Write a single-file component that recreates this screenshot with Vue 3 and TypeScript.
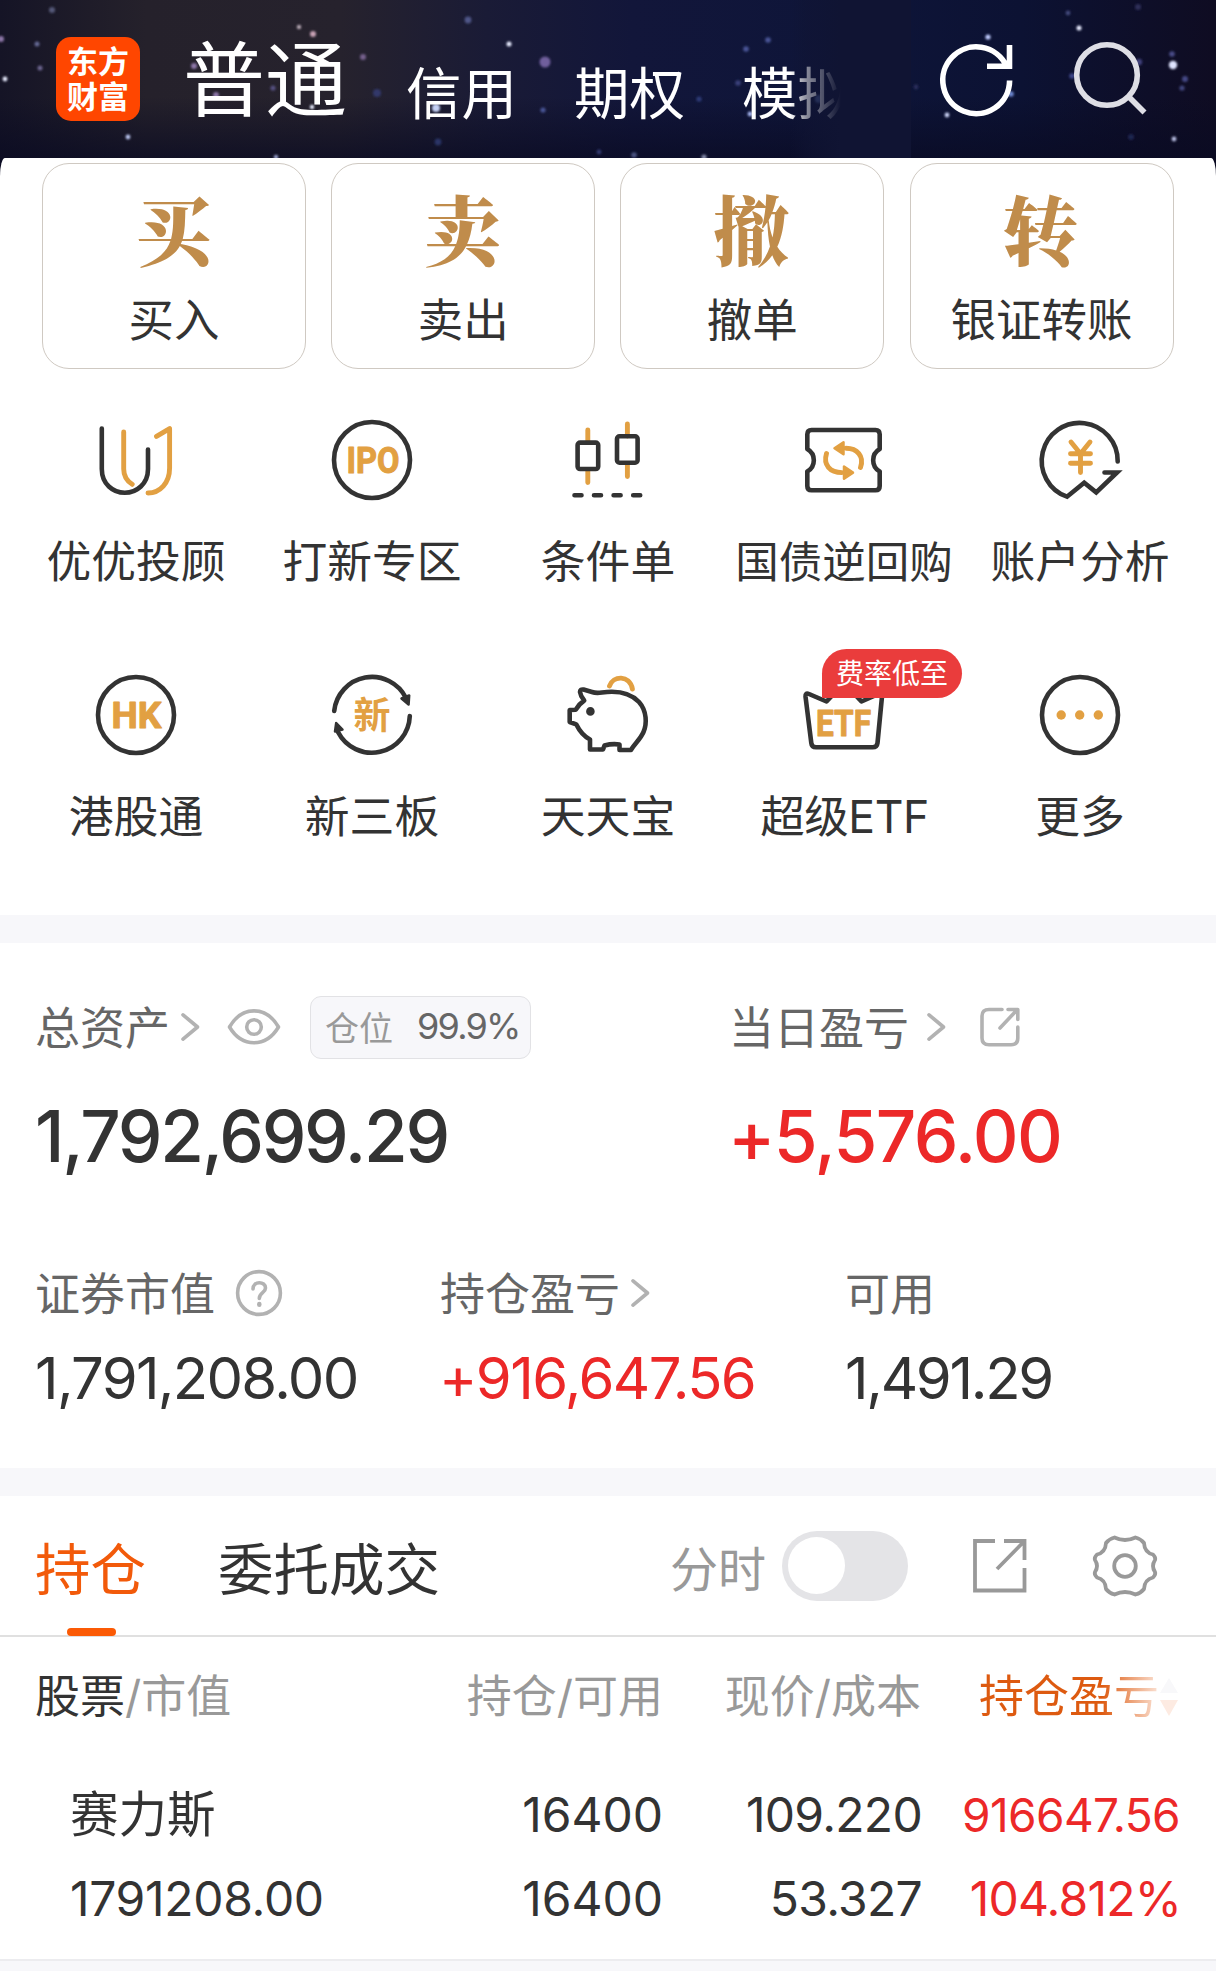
<script setup lang="ts">
interface Star { x: number; y: number; r: number; c: string }

const W = '#e8ecff'
const B = '#4a5596'
const P = '#8d76a8'
const stars: Star[] = [
  [52, 10, 3, '#555878'], [1, 39, 3, P], [37, 44, 2.5, '#666a96'], [40, 68, 2.5, '#6d6690'], [5, 79, 2.4, W],
  [128, 137, 2.4, '#b9c4ee'], [299, 27, 2.2, '#b7a9b4'], [313, 34, 3, '#c9a3b6'], [194, 66, 3, P], [216, 95, 3, P],
  [273, 88, 2.6, '#574f80'], [312, 107, 2.2, W], [363, 57, 3, '#75618c'], [377, 93, 4, '#33386a'], [276, 157, 2.2, '#9aa3cf'],
  [436, 108, 4, '#c4d0f5'], [468, 20, 3.4, '#4f5688'], [509, 44, 2.5, W], [545, 62, 5.5, '#6f5f9c'], [543, 110, 2.6, B],
  [438, 142, 3.4, '#2b3566'], [599, 152, 2.4, '#343a70'], [746, 49, 2.8, B], [768, 40, 2.8, B], [738, 83, 2.8, '#3b417a'],
  [750, 114, 2.4, '#a5b4ef'], [699, 99, 2.6, '#2d3a78'], [819, 99, 4, '#4b629c'], [634, 155, 2.8, '#4a5280'], [704, 157, 2.6, '#8187a6'],
  [988, 37, 2.6, '#c0cbff'], [1068, 13, 2.4, '#43487c'], [1079, 28, 2.5, W], [1138, 7, 3, '#2d2d58'], [1173, 65, 4.2, '#dfe4ff'],
  [1172, 54, 2.8, '#4a4c88'], [1185, 79, 3, '#454986'], [1182, 88, 2.6, '#43467e'], [1174, 139, 2.4, '#b9bfe4'], [947, 115, 2.4, '#c9d2f4'],
  [1011, 94, 2.8, '#6c86cf'], [1072, 76, 2.8, '#3c4488'], [1139, 62, 3.2, '#3f3f7a'], [916, 87, 2.4, '#292e5c'], [1131, 137, 3, '#1e2650'],
].map(([x, y, r, c]) => ({ x, y, r, c }) as Star)

const trades = [
  { mark: '买', label: '买入' },
  { mark: '卖', label: '卖出' },
  { mark: '撤', label: '撤单' },
  { mark: '转', label: '银证转账' },
]

const tools = [
  { icon: 'uu', label: '优优投顾' },
  { icon: 'ipo', label: '打新专区' },
  { icon: 'candles', label: '条件单' },
  { icon: 'ticket', label: '国债逆回购', tight: true },
  { icon: 'analysis', label: '账户分析' },
  { icon: 'hk', label: '港股通' },
  { icon: 'board', label: '新三板' },
  { icon: 'pig', label: '天天宝' },
  { icon: 'etf', label: '超级ETF', badge: '费率低至', latin: true },
  { icon: 'more', label: '更多' },
]
</script>

<template>
  <div class="page">
    <header class="top">
      <svg class="sky" width="1216" height="176" viewBox="0 0 1216 176">
        <defs>
          <filter id="soft" x="-50%" y="-50%" width="200%" height="200%"><feGaussianBlur stdDeviation="0.9" /></filter>
        </defs>
        <circle v-for="(s, i) in stars" :key="i" :cx="s.x" :cy="s.y" :r="s.r" :fill="s.c" filter="url(#soft)" />
      </svg>
      <div class="logo"><span>东方</span><span>财富</span></div>
      <nav class="modes">
        <span class="mode active">普通</span>
        <span class="mode">信用</span>
        <span class="mode">期权</span>
        <span class="mode">模拟</span>
      </nav>
      <div class="fade"></div>
      <svg class="refresh" width="80" height="80" viewBox="0 0 80 80" fill="none" stroke="#fff" stroke-width="5.6">
        <path d="M73.6 40.5A33.4 33.4 0 1 1 70.4 26M73.5 5V28.5M51 26.2H76.2" />
      </svg>
      <svg class="search" width="80" height="80" viewBox="0 0 80 80" fill="none" stroke="#dedee5" stroke-width="5.6">
        <circle cx="34" cy="35" r="30.3" /><path d="M55.5 56.5L71.5 72.5" />
      </svg>
    </header>

    <main class="sheet">
      <section class="trades">
        <button v-for="t in trades" :key="t.label" class="trade">
          <span class="mark">{{ t.mark }}</span>
          <span class="trade-label">{{ t.label }}</span>
        </button>
      </section>

      <section class="tools">
        <div v-for="t in tools" :key="t.label" class="tool">
          <svg class="icon" width="88" height="88" viewBox="-44 -44 88 88" fill="none" stroke="#333" stroke-width="4.6" stroke-linecap="round" stroke-linejoin="round">
            <template v-if="t.icon === 'uu'">
              <path d="M-34.2 -31.5V9C-34.2 24 -23 32.8 -11.200 32.8S12 24 12 9V-10.5" />
              <path class="gold" d="M-12.3 -28V9C-12.3 16 -9 21 -3.8 24.3M20.5 -23.6L33.6 -31.4V8C33.6 23 24 33 12 33" />
            </template>
            <template v-else-if="t.icon === 'ipo'">
              <circle r="38" />
              <text class="tag" x="-25.5" y="13.2" textLength="53" lengthAdjust="spacingAndGlyphs">IPO</text>
            </template>
            <template v-else-if="t.icon === 'candles'">
              <path class="gold" d="M-20.2 -30V-18M-20.2 10V22.5M19.4 -36V-24M19.4 4V16.5" />
              <rect x="-30.4" y="-17.4" width="20.6" height="26.4" rx="2.5" />
              <rect x="9" y="-23.7" width="20.6" height="26.4" rx="2.5" />
              <path d="M-33.5 35.3H-26.5M-14 35.3H-7M5.6 35.3H12.6M25.2 35.3H32.2" />
            </template>
            <template v-else-if="t.icon === 'ticket'">
              <path d="M-32.500 -30H31.500Q35.700 -30 35.700 -25.800V-11C27 -6 27 6.500 35.700 11.500V26Q35.700 30.300 31.500 30.300H-32.500Q-36.700 30.300 -36.700 26V11.500C-28 6.500 -28 -6 -36.700 -11V-25.800Q-36.700 -30 -32.500 -30Z" />
              <path class="gold" d="M-17.500 -6.500C-21 5 -14 12.600 -2 12.600M16.500 7.500C20.500 -4 13 -11.700 2 -11.700" />
              <path class="gold solid" d="M-9.500 -11.700L-.5 -17.700V-5.700ZM9 12.600L0 6.500V18.700Z" />
            </template>
            <template v-else-if="t.icon === 'analysis'">
              <path stroke-linejoin="miter" d="M37.700 1.500A38 38 0 1 0 -13 36.700L4.200 22.800L16.200 32.400L37 12.500H24.500" />
              <path class="gold" d="M-9 -18L.5 -6.300L10 -18M.5 -6.300V12.500M-9.500 -6.300H10.500M-9.500 3.300H10.500" />
            </template>
            <template v-else-if="t.icon === 'hk'">
              <circle r="38" />
              <text class="tag" x="-24.500" y="13" textLength="50" lengthAdjust="spacingAndGlyphs">HK</text>
            </template>
            <template v-else-if="t.icon === 'board'">
              <path d="M-37.800 -4A38 38 0 0 1 34 -17M37.800 1A38 38 0 0 1 -34 17" />
              <path class="dark" d="M29.500 -16.500L37.200 -19.500L36.600 -10.500ZM-29.500 14.500L-35.800 8L-37 16.500Z" stroke-width="2.500" />
              <text class="xin" x="-18.500" y="13.500">新</text>
            </template>
            <template v-else-if="t.icon === 'pig'">
              <path class="gold" d="M1.500 -29C5 -39.500 21.500 -40.500 24.400 -26" />
              <path d="M-28 -23Q-28 -26 -24.500 -25.500L-16 -23Q-12 -21.500 -6 -22.500C12 -25 23 -21.500 31 -13C39 -4 39 9 35.500 17C32 25 26 29 23 35H11.500V29.500Q4 28.500 -3.500 30.500L-5 34.500H-18V24.500C-25 21 -29 15 -31.800 9.300L-38.300 7V-5L-32.200 -5.300Q-29 -11 -23.800 -14.500Q-27.500 -19 -28 -23Z" />
              <circle class="dark" cx="-17.600" cy="-3.600" r="2.800" stroke-width="3" />
            </template>
            <template v-else-if="t.icon === 'etf'">
              <path d="M-38.500 -18.500Q-38.800 -22.700 -35 -21L-17.500 -13.500L0 -32L17.500 -13.500L34.500 -21Q38.300 -22.700 38 -18.500L33.500 28Q33 32.300 28.700 32.300H-28Q-32.300 32.300 -32.700 28Z" />
              <text class="tag" x="-28" y="21" textLength="55" lengthAdjust="spacingAndGlyphs">ETF</text>
            </template>
            <template v-else>
              <circle r="38" />
              <circle class="dot" cx="-18.800" r="4.700" />
              <circle class="dot" cx="-.3" r="4.700" />
              <circle class="dot" cx="18.300" r="4.700" />
            </template>
          </svg>
          <span class="tool-label" :class="{ tight: t.tight, latin: t.latin }">{{ t.label }}</span>
          <span v-if="t.badge" class="badge">{{ t.badge }}</span>
        </div>
      </section>

      <div class="band"></div>

      <section class="assets">
        <div class="totals">
          <div class="total">
            <div class="cap">
              <span class="cap-text">总资产</span>
              <svg class="chev" width="20" height="32" viewBox="0 0 20 32"><path d="M2 3.800L16.500 16L2 28.200" /></svg>
              <svg class="eye" width="54" height="38" viewBox="0 0 54 38"><path d="M2.500 19C15 -2.500 39 -2.500 51.500 19C39 40 15 40 2.500 19Z" /><circle cx="27" cy="19" r="7.300" /></svg>
              <span class="pill"><i>仓位</i><b>99.9%</b></span>
            </div>
            <div class="big">1,792,699.29</div>
          </div>
          <div class="total day">
            <div class="cap">
              <span class="cap-text">当日盈亏</span>
              <svg class="chev" width="20" height="32" viewBox="0 0 20 32"><path d="M2 3.800L16.500 16L2 28.200" /></svg>
              <svg class="share" width="40" height="40" viewBox="0 0 40 40"><path d="M22 2.500H9Q2 2.500 2 9V31Q2 37.800 9 37.800H31Q37.800 37.800 37.800 31V20M28 2.500H37.800V12.500M36.500 3.500L20 21" /></svg>
            </div>
            <div class="big up">+5,576.00</div>
          </div>
        </div>
        <div class="details">
          <div class="detail">
            <div class="cap">
              <span class="cap-text">证券市值</span>
              <svg class="help" width="48" height="48" viewBox="0 0 48 48"><circle cx="24" cy="24" r="21.400" /><path d="M18 20C18 11.500 30.500 12 30.500 19C30.500 24 24.300 23.500 24.300 29.500" /><path d="M24.300 35v.8" stroke-width="4.500" /></svg>
            </div>
            <div class="mid">1,791,208.00</div>
          </div>
          <div class="detail">
            <div class="cap">
              <span class="cap-text">持仓盈亏</span>
              <svg class="chev" width="20" height="32" viewBox="0 0 20 32"><path d="M2 3.800L16.500 16L2 28.200" /></svg>
            </div>
            <div class="mid profit up">+916,647.56</div>
          </div>
          <div class="detail">
            <div class="cap"><span class="cap-text">可用</span></div>
            <div class="mid cash">1,491.29</div>
          </div>
        </div>
      </section>

      <div class="band"></div>

      <section class="holdings">
        <div class="tabs">
          <span class="tab on">持仓</span>
          <span class="tab">委托成交</span>
          <span class="minute">分时</span>
          <span class="toggle"></span>
          <svg class="open" width="56" height="56" viewBox="0 0 56 56"><path d="M23 3H3V52.500H52.500V30M32 3H52.500V22M52 3.500L25 31" /></svg>
          <svg class="gear" width="68" height="68" viewBox="-34 -34 68 68">
            <path d="M-10.500 -28.500Q0 -23.500 10.500 -28.500Q16 -27 19 -23Q19.500 -13.500 28 -11.500Q31 -8.500 30 -6Q26 0 30 6Q31 8.500 28 11.500Q19.500 13.500 19 23Q16 27 10.500 28.500Q0 23.500 -10.500 28.500Q-16 27 -19 23Q-19.500 13.500 -28 11.500Q-31 8.500 -30 6Q-26 0 -30 -6Q-31 -8.500 -28 -11.500Q-19.500 -13.500 -19 -23Q-16 -27 -10.500 -28.500Z" />
            <circle r="10.800" />
          </svg>
        </div>
        <div class="row head">
          <span class="c1"><em>股票</em>/市值</span>
          <span class="c2">持仓/可用</span>
          <span class="c3">现价/成本</span>
          <span class="c4 sort"><span>持仓盈亏</span><svg width="20" height="42" viewBox="0 0 20 42"><path d="M1 17L10 2L19 17Z" fill="#f8f8fa" /><path d="M1 24L10 40L19 24Z" fill="#fdebe2" /></svg></span>
        </div>
        <div class="row item first">
          <span class="c1 name">赛力斯</span>
          <span class="c2">16400</span>
          <span class="c3">109.220</span>
          <span class="c4 up">916647.56</span>
        </div>
        <div class="row item">
          <span class="c1">1791208.00</span>
          <span class="c2">16400</span>
          <span class="c3">53.327</span>
          <span class="c4 up">104.812%</span>
        </div>
        <div class="foot"></div>
      </section>
    </main>
  </div>
</template>

<style>
body { background: #0d0f26; }
</style>

<style scoped>
.page {
  position: relative;
  width: 1216px;
  height: 1971px;
  overflow: hidden;
  background: #0d0f26;
  color: #333;
  font-family: Inter, "Noto Sans CJK SC", sans-serif;
}
.top {
  position: relative;
  display: flex;
  height: 158px;
  box-sizing: border-box;
  padding-left: 56px;
}
.sky {
  position: absolute;
  left: 0;
  top: 0;
  background:
    linear-gradient(180deg, transparent 55%, rgba(9, 10, 34, 0.75) 92%),
    linear-gradient(90deg, #151426 0, #25212b 12%, #26222d 28%, #1a1b36 40%, #12163a 52%, #0e1539 70%, #0c1233 84%, #0f0c22 100%);
}
.logo {
  position: relative;
  display: flex;
  flex-direction: column;
  align-items: center;
  width: 84px;
  height: 84px;
  margin-top: 37px;
  box-sizing: border-box;
  padding-top: 7px;
  border-radius: 15px;
  background: #ff4600;
  color: #fff;
  font-weight: 700;
  font-size: 31px;
  line-height: 35px;
}
.modes {
  position: relative;
  display: flex;
  gap: 57px;
  height: 158px;
  margin-left: 43px;
  color: #fff;
  white-space: nowrap;
}
.mode { font-size: 55.500px; line-height: 60px; margin-top: 64px; }
.mode.active { font-size: 82px; line-height: 90px; margin-top: 36px; margin-right: 2px; }
.fade {
  position: absolute;
  left: 790px;
  top: 0;
  width: 121px;
  height: 158px;
  background: linear-gradient(90deg, rgba(16, 20, 51, 0) 0, rgba(16, 20, 51, 0.5) 14%, #101433 42%);
}
.refresh { position: absolute; left: 936px; top: 39.500px; }
.search { position: absolute; left: 1073px; top: 40px; }

.sheet {
  position: relative;
  height: 1813px;
  border-radius: 5px 5px 0 0 / 18px 18px 0 0;
  background: #fff;
}
.trades {
  display: grid;
  grid-template-columns: repeat(4, 264px);
  gap: 25.200px;
  padding: 5px 42px 0;
}
.trade {
  display: flex;
  flex-direction: column;
  align-items: center;
  height: 206px;
  box-sizing: border-box;
  padding: 15px 0 0;
  border: 1px solid #cfc9c2;
  border-radius: 27px;
  background: #fff;
  font: inherit;
  color: #333;
}
.mark {
  height: 96px;
  margin-right: 2px;
  font-family: "Noto Serif CJK SC", "Noto Sans CJK SC", serif;
  font-weight: 900;
  font-size: 76px;
  line-height: 97px;
  color: #c08c4b;
}
.trade-label { margin-top: 16px; font-size: 45.500px; line-height: 60px; }

.tools {
  display: grid;
  grid-template-columns: repeat(5, 236px);
  grid-auto-rows: 255px;
  height: 510px;
  padding: 47px 18px 0;
  margin-bottom: -11px;
}
.tool { position: relative; display: flex; flex-direction: column; align-items: center; }
.gold { stroke: #e2a042; stroke-width: 4.900; }
.gold.solid { fill: #e2a042; stroke-width: 2.500; }
.dot { fill: #e2a042; stroke: none; }
.dark { fill: #333; }
.tag {
  font-family: Roboto, Inter, sans-serif;
  font-weight: 700;
  font-size: 36px;
  fill: #e2a042;
  stroke: #e2a042;
  stroke-width: 1;
}
.xin { font-weight: 700; font-size: 37px; fill: #e2a042; stroke: none; }
.tool-label { margin-top: 27.500px; font-size: 44.800px; line-height: 60px; white-space: nowrap; }
.tool-label.tight { font-size: 43.500px; }
.tool-label.latin { font-size: 44.500px; letter-spacing: -0.400px; margin-left: 1px; }
.badge {
  position: absolute;
  left: 96px;
  top: -22px;
  width: 140px;
  height: 49px;
  border-radius: 25px 25px 25px 0;
  background: #ea3c3c;
  color: #fff;
  font-size: 28px;
  line-height: 50px;
  text-align: center;
}

.band { height: 28px; background: #f7f7fa; }

.assets { height: 525px; box-sizing: border-box; padding: 49px 0 0 35px; }
.cap { display: flex; align-items: center; height: 70px; font-size: 45px; color: #666; white-space: nowrap; }
.cap-text { margin-bottom: 3px; }
.totals { display: grid; grid-template-columns: 694px 1fr; }
.details { display: grid; grid-template-columns: 405px 405px 1fr; margin-top: 68px; }
.chev, .eye, .share, .help { flex: none; fill: none; stroke: #b2b2b2; stroke-width: 3.600; stroke-linecap: round; stroke-linejoin: round; }
.chev { margin-left: 11px; }
.day .chev { margin-left: 18px; }
.eye { margin-left: 26px; }
.share { margin-left: 33px; }
.help { margin-left: 20px; }
.pill {
  display: flex;
  align-items: center;
  width: 221px;
  height: 63px;
  margin-left: 29px;
  box-sizing: border-box;
  padding: 0 0 2px 14px;
  border: 1px solid #e2e2e5;
  border-radius: 11px;
  background: #f7f7fa;
  font-size: 34px;
}
.pill i { font-style: normal; color: #999; }
.pill b { margin-left: 24px; font-weight: 400; font-size: 36px; letter-spacing: -1.800px; }
.big { height: 108px; margin-top: 20px; font-size: 71px; line-height: 108px; font-weight: 500; letter-spacing: -2.250px; white-space: nowrap; }
.day .big { margin-left: -1px; letter-spacing: -1.550px; }
.mid { height: 80px; margin-top: 10px; font-size: 58px; line-height: 80px; letter-spacing: -1.700px; white-space: nowrap; }
.mid.profit { margin-left: -1px; letter-spacing: -1.550px; }
.mid.cash { letter-spacing: -2.300px; }
.up { color: #ec2828; }

.tabs {
  position: relative;
  display: flex;
  align-items: center;
  height: 141px;
  box-sizing: border-box;
  padding: 0 0 0 35px;
  border-bottom: 2px solid #e0e0e0;
  font-size: 55.500px;
}
.tab { position: relative; margin-right: 72px; white-space: nowrap; }
.tab.on { color: #f25a0a; }
.tab.on::after {
  content: "";
  position: absolute;
  left: 32px;
  bottom: -30px;
  width: 49px;
  height: 8px;
  border-radius: 4px;
  background: #fb5a05;
}
.minute { position: relative; margin-left: 158px; font-size: 48px; color: #999; }
.toggle { flex: none; width: 126px; height: 70px; margin-left: 16px; border-radius: 35px; background: #e4e4e7; }
.toggle::before { content: ""; display: block; width: 57px; height: 57px; margin: 6px 0 0 6px; border-radius: 50%; background: #fff; }
.open, .gear { flex: none; fill: none; stroke: #999; stroke-width: 3.800; }
.open { margin-left: 64px; }
.gear { margin-left: 63px; stroke-linejoin: round; }

.row { display: grid; grid-template-columns: 400px 263px 259px 258px; white-space: nowrap; }
.c2, .c3, .c4 { text-align: right; }
.head { height: 114px; font-size: 45px; line-height: 119px; color: #999; }
.head .c1 { padding-left: 35px; }
.head .c3 { margin-right: 1px; }
.head em { font-style: normal; color: #333; }
.sort { display: flex; justify-content: flex-end; align-items: center; margin-right: 1px; color: #d9590f; }
.sort span { background: linear-gradient(90deg, #dd5a10 0, #dd5a10 68%, #fbe3d6 100%); background-clip: text; color: transparent; }
.item { height: 84px; font-size: 48px; line-height: 84px; }
.item .c1 { padding-left: 70px; letter-spacing: -0.300px; }
.item .c3 { letter-spacing: -0.700px; }
.item .c4 { letter-spacing: -0.800px; margin-right: -1px; }
.item .name { font-size: 48.500px; letter-spacing: 0; }
.item.first { margin-top: 22px; }
.item.first .c4 { font-size: 46px; letter-spacing: -0.600px; margin-right: 0; }
.foot { height: 12px; margin-top: 18px; border-top: 2px solid #ececef; background: #f7f7fa; }
</style>
